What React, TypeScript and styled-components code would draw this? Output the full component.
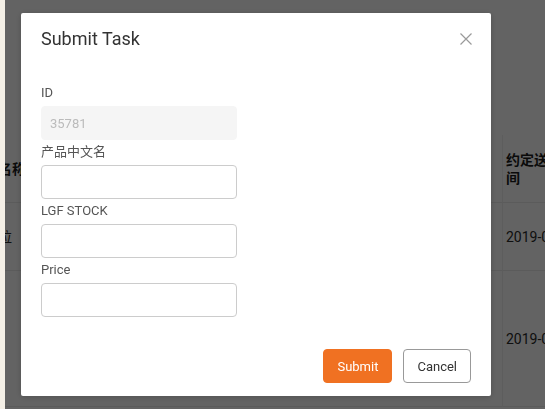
import React from 'react'
import styled, { createGlobalStyle } from 'styled-components'

const GlobalStyle = createGlobalStyle`
  html, body {
    margin: 0;
    padding: 0;
    height: 100%;
    overflow: hidden;
  }
  body {
    font-family: Roboto, 'Noto Sans CJK SC', sans-serif;
    color: #333;
    background: #fff;
  }
  * {
    box-sizing: border-box;
  }
`

// page behind the modal
const Page = styled.div`
  display: flex;
  height: 409px;
`

const Sidebar = styled.div`
  position: relative;
  z-index: 2000;
  width: 5px;
  flex-shrink: 0;
  background: #f4efe6;
`

const Content = styled.div`
  flex: 1;
  overflow: hidden;
  padding-top: 135px;
`

const Table = styled.div`
  display: grid;
  grid-template-columns: 21px 476px 90px;
  width: 587px;
`

interface CellProps {
  head?: boolean
  height: number
  align?: 'left' | 'right'
  inset?: number
}

const Cell = styled.div<CellProps>`
  height: ${(p) => p.height}px;
  display: flex;
  align-items: center;
  justify-content: ${(p) => (p.align === 'right' ? 'flex-end' : 'flex-start')};
  overflow: hidden;
  white-space: ${(p) => (p.align === 'right' ? 'nowrap' : 'normal')};
  padding: ${(p) => (p.align === 'right' ? `0 ${p.inset ?? 0}px 0 0` : '0 10px 0 3px')};
  border-bottom: 1px solid #ebebeb;
  font-size: 14px;
  line-height: 18px;
  font-weight: ${(p) => (p.head ? 700 : 400)};
  color: ${(p) => (p.head ? '#1c1c1c' : '#2a2a2a')};
`

const SplitCell = styled(Cell)`
  border-left: 1px solid #f0f0f0;
`

// modal
const Overlay = styled.div`
  position: fixed;
  inset: 0;
  z-index: 1000;
  background: rgba(0, 0, 0, 0.61);
  display: flex;
  align-items: flex-start;
  padding: 13px 0 0 21px;
`

const Modal = styled.div`
  width: 470px;
  background: #fff;
  border-radius: 2px;
  box-shadow: 0 1px 6px rgba(0, 0, 0, 0.2);
`

const ModalHeader = styled.div`
  display: flex;
  align-items: center;
  justify-content: space-between;
  padding: 14px 19px 0 20px;
`

const Title = styled.h3`
  margin: 0;
  font-size: 18px;
  line-height: 24px;
  font-weight: 400;
  color: #333;
`

const CloseButton = styled.button`
  border: 0;
  background: none;
  padding: 0;
  width: 12px;
  height: 12px;
  display: flex;
  cursor: pointer;
`

const ModalBody = styled.div`
  padding: 30px 20px 0;
`

const Label = styled.label`
  display: block;
  padding: 2px 0 3px;
  font-size: 13px;
  line-height: 20px;
  color: #555;
`

interface InputProps {
  disabled?: boolean
}

const Input = styled.input<InputProps>`
  display: block;
  width: 196px;
  height: 34px;
  padding: 0 8px;
  border: 1px solid ${(p) => (p.disabled ? '#f5f5f5' : '#ccc')};
  border-radius: 4px;
  background: ${(p) => (p.disabled ? '#f5f5f5' : '#fff')};
  font-family: Roboto, sans-serif;
  font-size: 13px;
  color: #bbb;
  outline: none;
`

const ModalFooter = styled.div`
  display: flex;
  justify-content: flex-end;
  gap: 11px;
  padding: 32px 20px 13px;
`

interface ButtonProps {
  primary?: boolean
}

const Button = styled.button<ButtonProps>`
  height: 34px;
  padding: 0 13px;
  border-radius: 4px;
  border: 1px solid ${(p) => (p.primary ? '#f07122' : '#999')};
  background: ${(p) => (p.primary ? '#f07122' : '#fff')};
  color: ${(p) => (p.primary ? '#fff' : '#333')};
  font-family: Roboto, sans-serif;
  font-size: 13px;
  cursor: pointer;
`

const fields = [
  { label: 'ID', value: '35781', disabled: true },
  { label: '产品中文名', value: '' },
  { label: 'LGF STOCK', value: '' },
  { label: 'Price', value: '' },
]

const App: React.FC = () => {
  return (
    <>
      <GlobalStyle />
      <Page>
        <Sidebar />
        <Content>
          <Table>
            <Cell head height={68} align="right" inset={0}>产品名称</Cell>
            <Cell head height={68}>产品规格</Cell>
            <SplitCell head height={68}>约定送货时间</SplitCell>
            <Cell height={68} align="right" inset={14}>垃</Cell>
            <Cell height={68}>—</Cell>
            <SplitCell height={68}>2019-05-20</SplitCell>
            <Cell height={136} align="right"></Cell>
            <Cell height={136}></Cell>
            <SplitCell height={136}>2019-05-21</SplitCell>
          </Table>
        </Content>
      </Page>
      <Overlay>
        <Modal>
          <ModalHeader>
            <Title>Submit Task</Title>
            <CloseButton aria-label="close">
              <svg width="12" height="12" viewBox="0 0 12 12">
                <path d="M0.5 0.5 L11.5 11.5 M11.5 0.5 L0.5 11.5" stroke="#9a9a9a" strokeWidth="1.2" fill="none" />
              </svg>
            </CloseButton>
          </ModalHeader>
          <ModalBody>
            {fields.map((f) => (
              <div key={f.label}>
                <Label>{f.label}</Label>
                <Input disabled={f.disabled} defaultValue={f.value} />
              </div>
            ))}
          </ModalBody>
          <ModalFooter>
            <Button primary>Submit</Button>
            <Button>Cancel</Button>
          </ModalFooter>
        </Modal>
      </Overlay>
    </>
  )
}

export default App
